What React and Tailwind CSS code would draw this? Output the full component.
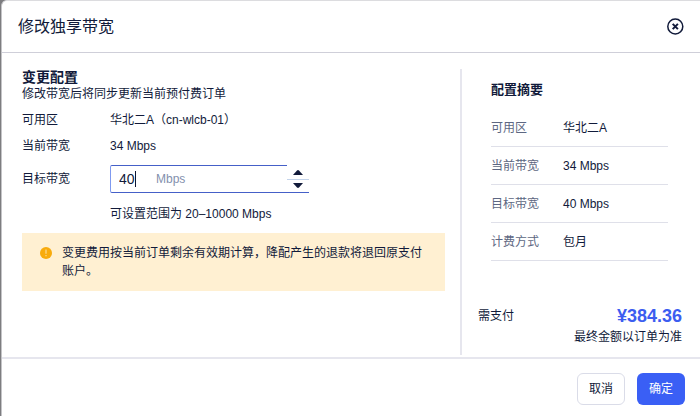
import React, { useState } from 'react'

const MIN = 20
const MAX = 10000

const summaryRows = (target) => [
  { label: '可用区', value: '华北二A' },
  { label: '当前带宽', value: '34 Mbps' },
  { label: '目标带宽', value: `${target} Mbps` },
  { label: '计费方式', value: '包月' },
]

function CloseIcon() {
  return (
    <svg width="18" height="18" viewBox="0 0 18 18" fill="none" stroke="currentColor" aria-hidden="true">
      <circle cx="9.3" cy="8.5" r="7.5" strokeWidth="1.5" />
      <path d="M6.7 5.9l5.2 5.2M11.9 5.9l-5.2 5.2" strokeWidth="2" />
    </svg>
  )
}

function WarningIcon() {
  return (
    <svg width="12" height="12" viewBox="0 0 12 12" className="my-[3px] shrink-0" aria-hidden="true">
      <circle cx="6" cy="6" r="6" fill="#f8ab0c" />
      <path d="M6 2.6v4.2M6 7.9v1.3" stroke="#fbd88a" strokeWidth="1.3" />
    </svg>
  )
}

function Arrow({ down }) {
  return (
    <svg width="10" height="5" viewBox="0 0 10 5" fill="currentColor" aria-hidden="true">
      <path d={down ? 'M0 0h10L6 4.6q-1 .8-2 0z' : 'M0 5h10L6 .4q-1-.8-2 0z'} />
    </svg>
  )
}

function BandwidthInput({ value, onChange }) {
  const step = (delta) => onChange(String(Math.min(MAX, Math.max(MIN, Number(value) + delta))))

  return (
    <div className="flex h-7 w-[199px]">
      <div className="flex flex-1 items-center rounded-l-xs border-y border-l border-y-[#4560c8] border-l-[#7f9af0] pl-2">
        <input
          id="bandwidth"
          type="text"
          inputMode="numeric"
          value={value}
          onChange={(e) => onChange(e.target.value.replace(/\D/g, ''))}
          className="field-sizing-content min-w-4 bg-transparent text-sm leading-5 caret-transparent outline-none"
        />
        <span className="h-4 w-px bg-[#0c1433]" />
        <span className="ml-5 text-[#8390ad]">Mbps</span>
      </div>
      <div className="flex w-[22px] flex-col border-b border-[#4560c8]">
        <button type="button" aria-label="增加" onClick={() => step(1)} className="flex flex-1 items-center justify-center border-b border-[#c3d3ea] pt-px">
          <Arrow />
        </button>
        <button type="button" aria-label="减少" onClick={() => step(-1)} className="flex flex-1 items-center justify-center">
          <Arrow down />
        </button>
      </div>
    </div>
  )
}

export default function App() {
  const [target, setTarget] = useState('40')

  return (
    <div className="bg-[#7d7d80] pl-px">
      <div
        role="dialog"
        aria-labelledby="dialog-title"
        className="rounded-tl-md border-t border-l border-t-[#dcdcdf] border-l-[#c4c4c7] bg-white font-['Liberation_Sans','Noto_Sans_CJK_SC',sans-serif] text-xs leading-[18px] text-[#111a3a]"
      >
        <header className="flex h-[52px] items-center justify-between border-b border-[#cfcfd9] px-4">
          <h1 id="dialog-title" className="text-base leading-6">修改独享带宽</h1>
          <button type="button" aria-label="关闭">
            <CloseIcon />
          </button>
        </header>

        <div className="flex pt-4">
          <section className="flex-1 pr-[15px] pl-5">
            <h2 className="text-sm leading-4 font-bold">变更配置</h2>
            <p>修改带宽后将同步更新当前预付费订单</p>

            <dl className="mt-2 grid grid-cols-[88px_1fr] gap-y-2">
              <dt>可用区</dt>
              <dd>华北二A（cn-wlcb-01）</dd>
              <dt>当前带宽</dt>
              <dd>34 Mbps</dd>
            </dl>
            <div className="mt-2.5 grid grid-cols-[88px_1fr] items-center gap-y-3">
              <label htmlFor="bandwidth">目标带宽</label>
              <BandwidthInput value={target} onChange={setTarget} />
              <p className="col-start-2">可设置范围为 20–10000 Mbps</p>
            </div>

            <div className="mt-2.5 flex gap-2.5 bg-[#fff0d2] py-[11px] pr-4 pl-[18px]">
              <WarningIcon />
              <p>变更费用按当前订单剩余有效期计算，降配产生的退款将退回原支付账户。</p>
            </div>
          </section>

          {/* Order summary */}
          <aside className="mb-0.5 flex w-60 shrink-0 flex-col border-l-2 border-[#e6e6ee]">
            <div className="pt-3 pr-8 pl-[29px]">
              <h2 className="text-[13px] leading-[18px] font-bold">配置摘要</h2>
              <dl className="mt-2.5">
                {summaryRows(target).map((row) => (
                  <div key={row.label} className="flex border-b border-[#dfe0e9] pt-2.5 pb-[9px]">
                    <dt className="w-[72px] text-[#5d6782]">{row.label}</dt>
                    <dd>{row.value}</dd>
                  </div>
                ))}
              </dl>
            </div>
            <div className="mt-[43px] pr-[18px] pb-[9px] pl-4">
              <div className="flex items-center justify-between">
                <span>需支付</span>
                <strong className="text-lg leading-6 text-[#3c5df0]">¥384.36</strong>
              </div>
              <p className="text-right">最终金额以订单为准</p>
            </div>
          </aside>
        </div>

        <footer className="flex justify-end gap-3 border-t-2 border-[#e6e6ee] px-[15px] pt-3.5 pb-[11px]">
          <button type="button" className="h-8 rounded-md border border-[#dadce8] px-[11px]">取消</button>
          <button type="button" className="h-8 rounded-md bg-[#3a5ff5] px-3 text-white">确定</button>
        </footer>
      </div>
    </div>
  )
}
